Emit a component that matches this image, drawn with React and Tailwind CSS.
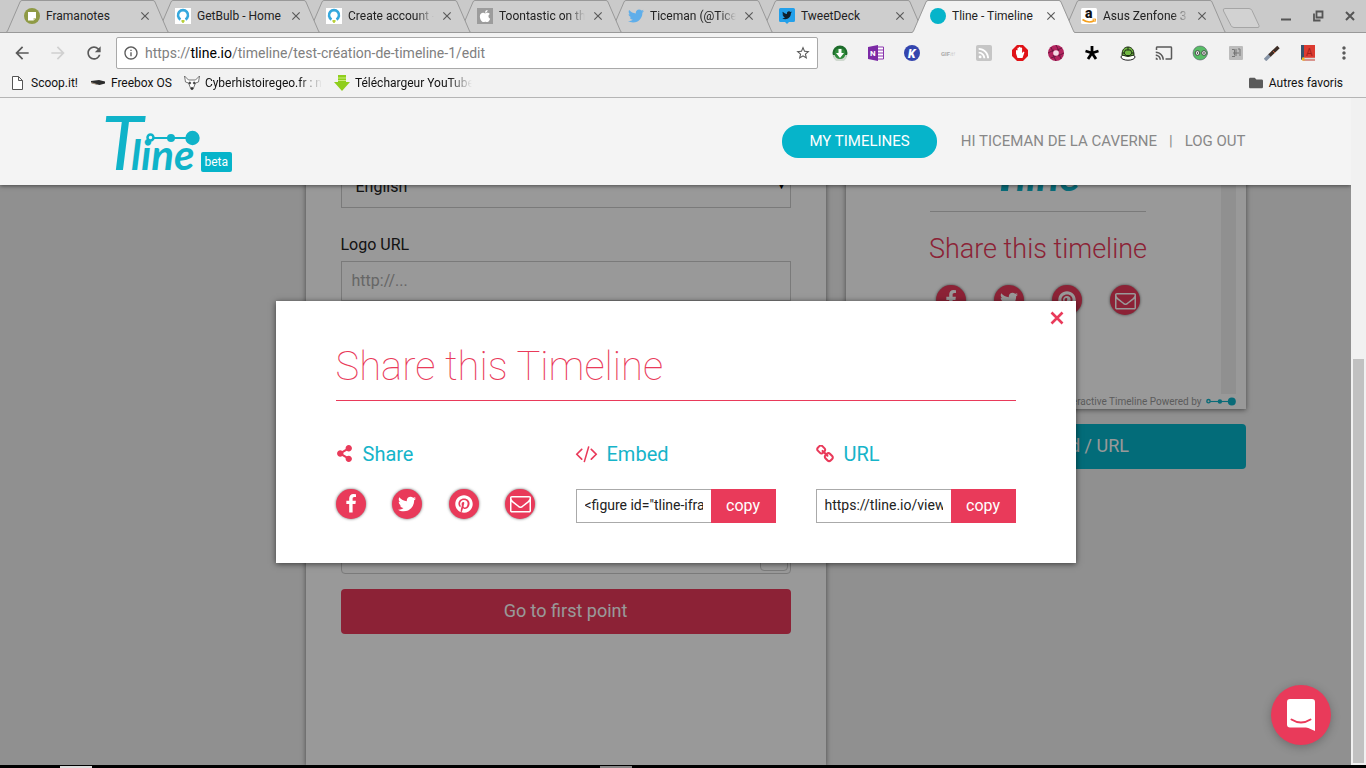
import React from 'react';
import clsx from 'clsx';
import { FaTwitter, FaPinterest, FaShareAlt, FaApple, FaFolder } from 'react-icons/fa';
import {
  MdArrowBack,
  MdArrowForward,
  MdRefresh,
  MdInfoOutline,
  MdStarBorder,
  MdMoreVert,
  MdCast,
  MdRssFeed,
  MdClose,
} from 'react-icons/md';

const tabs = [
  { title: 'Framanotes', icon: <NoteIcon /> },
  { title: 'GetBulb - Home', icon: <BulbIcon /> },
  { title: 'Create account - GetBulb', icon: <BulbIcon />, fade: true },
  { title: 'Toontastic on the App Store', icon: <AppleIcon />, fade: true },
  { title: 'Ticeman (@Ticeman)', icon: <FaTwitter className="size-4 text-[#5faeea]" />, fade: true },
  { title: 'TweetDeck', icon: <TweetDeckIcon /> },
  { title: 'Tline - Timeline', icon: <span className="block size-4 rounded-full bg-[#06b4ca]" />, active: true },
  { title: 'Asus Zenfone 3', icon: <AmazonIcon />, fade: true },
];

function NoteIcon() {
  return (
    <svg viewBox="0 0 16 16" className="size-4">
      <circle cx="8" cy="8" r="8" fill="#8f9a45" />
      <path d="M4 4h8v6l-2.500 2.500H4z" fill="#fff" />
      <path d="M9.500 12.500V10H12z" fill="#c3cb8c" />
    </svg>
  );
}

function BulbIcon() {
  return (
    <svg viewBox="0 0 16 16" className="size-4">
      <rect width="16" height="16" fill="#fff" />
      <path d="M5.500 11.500A5 5 0 1 1 10.500 11.500" fill="none" stroke="#35a8dd" strokeWidth="2.600" />
      <path d="M6.500 12h3v1.500L8.500 15h-1l-1-1.500z" fill="#b8cf3a" />
    </svg>
  );
}

function AppleIcon() {
  return (
    <span className="flex size-4 items-center justify-center bg-[#9c9c9c]">
      <FaApple className="size-3.5 text-white" />
    </span>
  );
}

function TweetDeckIcon() {
  return (
    <svg viewBox="0 0 16 16" className="size-4">
      <path d="M1.500 0h13A1.500 1.500 0 0 1 16 1.500v11a1.500 1.500 0 0 1-1.500 1.500H10l-2 2-2-2H1.500A1.500 1.500 0 0 1 0 12.500v-11A1.500 1.500 0 0 1 1.500 0z" fill="#23a0ea" />
      <path d="M13 4.300c-.4.200-.8.300-1.100.300.4-.2.700-.6.800-1-.4.200-.8.400-1.200.5A2 2 0 0 0 8 5.900C6.300 5.800 4.800 5 3.800 3.800c-.5.900-.3 2 .6 2.600-.3 0-.6-.1-.9-.2 0 1 .7 1.700 1.600 1.900-.3.100-.6.100-.9 0 .3.800 1 1.300 1.900 1.400-.9.600-1.800.9-2.900.8 3.800 2.200 8.700 0 8.700-5 .4-.3.800-.6 1.100-1z" fill="#10202c" />
    </svg>
  );
}

function AmazonIcon() {
  return (
    <svg viewBox="0 0 16 16" className="size-4">
      <rect width="16" height="16" rx="1.500" fill="#fff" />
      <text x="4" y="10" fontSize="14" fontWeight="900" fill="#111">a</text>
      <path d="M1.500 11.500q6 4.500 12 1" fill="none" stroke="#f5a01d" strokeWidth="1.600" />
      <path d="M11.500 11.200l3.200-.2-.8 3" fill="none" stroke="#f5a01d" />
    </svg>
  );
}

function FacebookIcon({ className }) {
  return (
    <svg viewBox="0 0 1792 1792" fill="currentColor" className={className}>
      <path d="M1343 12v264h-157q-86 0-116 36t-30 108v189h293l-39 296h-254v759h-306v-759h-255v-296h255v-218q0-186 104-288.500t277-102.500q147 0 228 12z" />
    </svg>
  );
}

function EnvelopeIcon({ className }) {
  return (
    <svg viewBox="0 0 1792 1792" fill="currentColor" className={className}>
      <path d="M1664 1504v-768q-32 36-69 66-268 206-426 338-51 43-83 67t-86.500 48.500-102.500 24.500h-2q-48 0-102.500-24.500t-86.500-48.500-83-67q-158-132-426-338-37-30-69-66v768q0 13 9.500 22.500t22.500 9.500h1472q13 0 22.500-9.500t9.500-22.500zm0-1051v-24.500l-.5-13-3-12.500-5.500-9-9-7.500-14-2.500h-1472q-13 0-22.500 9.500t-9.500 22.500q0 168 147 284 193 152 401 317 6 5 35 29.500t46 37.500 44.500 31.500 50.500 27.500 43 9h2q20 0 43-9t50.500-27.500 44.500-31.500 46-37.500 35-29.500q208-165 401-317 54-43 100.500-115.500t46.500-131.500zm128-37v1088q0 66-47 113t-113 47h-1472q-66 0-113-47t-47-113v-1088q0-66 47-113t113-47h1472q66 0 113 47t47 113z" />
    </svg>
  );
}

function CodeIcon({ className }) {
  return (
    <svg viewBox="0 0 1792 1792" fill="currentColor" className={className}>
      <path d="M553 1399l-50 50q-10 10-23 10t-23-10l-466-466q-10-10-10-23t10-23l466-466q10-10 23-10t23 10l50 50q10 10 10 23t-10 23l-393 393 393 393q10 10 10 23t-10 23zm591-1067l-373 1291q-4 13-15.500 19.500t-23.500 2.500l-62-17q-13-4-19.500-15.500t-2.500-24.500l373-1291q4-13 15.500-19.500t23.500-2.500l62 17q13 4 19.500 15.500t2.500 24.500zm657 651l-466 466q-10 10-23 10t-23-10l-50-50q-10-10-10-23t10-23l393-393-393-393q-10-10-10-23t10-23l50-50q10-10 23-10t23 10l466 466q10 10 10 23t-10 23z" />
    </svg>
  );
}

function LinkIcon({ className }) {
  return (
    <svg viewBox="64 64 1664 1664" fill="currentColor" className={className}>
      <path d="M1520 1216q0-40-28-68l-208-208q-28-28-68-28-42 0-72 32 3 3 19 18.500t21.500 21.500 15 19 13 25.500 3.500 27.500q0 40-28 68t-68 28q-15 0-27.500-3.500t-25.500-13-19-15-21.500-21.500-18.500-19q-33 31-33 73 0 40 28 68l206 207q27 27 68 27 40 0 68-26l147-146q28-28 28-67zm-703-705q0-40-28-68l-206-207q-28-28-68-28-39 0-68 27l-147 146q-28 28-28 67 0 40 28 68l208 208q27 27 68 27 42 0 72-31-3-3-19-18.500t-21.500-21.500-15-19-13-25.500-3.500-27.500q0-40 28-68t68-28q15 0 27.500 3.500t25.500 13 19 15 21.500 21.500 18.500 19q33-31 33-73zm895 705q0 120-85 203l-147 146q-83 83-203 83-121 0-204-85l-206-207q-83-83-83-203 0-123 88-209l-88-88q-86 88-208 88-120 0-204-84l-208-208q-84-84-84-204t85-203l147-146q83-83 203-83 121 0 204 85l206 207q83 83 83 203 0 123-88 209l88 88q86-88 208-88 120 0 204 84l208 208q84 84 84 204z" />
    </svg>
  );
}

function Nodes({ className }) {
  return (
    <svg viewBox="0 0 54 16" className={className}>
      <path d="M7 8h40" stroke="#0fb3c9" strokeWidth="2" />
      <circle cx="4.500" cy="7.500" r="3" fill="#f4f4f4" stroke="#0fb3c9" strokeWidth="2.500" />
      <circle cx="25" cy="8" r="4" fill="#0fb3c9" />
      <circle cx="46.500" cy="8" r="7.200" fill="#0fb3c9" />
    </svg>
  );
}

function Logo() {
  return (
    <span className="relative block h-[60px] w-[95px] whitespace-nowrap text-[#0fb3c9]">
      <span className="-ml-1 block font-['Lato',sans-serif] text-[42px] leading-[58px] font-bold italic first-letter:-mr-3 first-letter:text-[76px] first-letter:font-normal">
        Tline
      </span>
      <Nodes className="absolute top-[18px] left-10 h-4 w-[54px]" />
    </span>
  );
}

function Tab({ tab, order }) {
  return (
    <div
      className="relative -mr-3 flex h-[33px] w-[163px] shrink-0 items-center pr-[17px] pl-[18px]"
      style={{ zIndex: tab.active ? 20 : order }}
    >
      <svg viewBox="0 0 163 33" className="absolute inset-0 h-full w-full">
        <path
          d="M0 33L0 32.500Q1 32 1.500 31L14 2.500Q14.500 1 16 1H147Q148.500 1 149 2.500L161.500 31Q162 32.500 163 32.500L163 33Z"
          fill={tab.active ? '#f2f2f2' : '#cecece'}
        />
        <path
          d="M0 32.500Q1 32 1.500 31L14 2Q14.500 .5 16 .5H147Q148.500 .5 149 2L161.500 31Q162 32.500 163 32.500"
          fill="none"
          stroke="#999"
        />
        {!tab.active && <path d="M0 32.500H163" stroke="#999" />}
      </svg>
      <span className="relative shrink-0">{tab.icon}</span>
      <span
        className={clsx(
          'relative ml-1.5 flex-1 overflow-hidden whitespace-nowrap text-xs text-[#222]',
          tab.fade && 'mask-r-from-80%'
        )}
      >
        {tab.title}
      </span>
      <button type="button" aria-label="Close tab" className="relative ml-1.5 text-[#5a5a5a]">
        <MdClose className="size-3.5" />
      </button>
    </div>
  );
}

const extensions = [
  <svg viewBox="0 0 16 16" className="size-4">
    <circle cx="8" cy="8" r="7.500" fill="#1d6b2b" />
    <path d="M1 10a7 7 0 0 0 14 0" fill="#cfd8cf" />
    <circle cx="8" cy="8.500" r="5.500" fill="#2f8a3a" />
    <path d="M6.500 4h3v4H12l-4 5-4-5h2.500z" fill="#fff" />
  </svg>,
  <svg viewBox="0 0 16 16" className="size-4">
    <path d="M9 2h6.500v12H9z" fill="#fff" stroke="#8a35ad" />
    <path d="M10 5h5M10 8h5M10 11h5" stroke="#8a35ad" />
    <path d="M0 2l10-2v16L0 14z" fill="#7c2aa5" />
    <text x="2" y="11" fontSize="8" fontWeight="bold" fill="#fff">N</text>
  </svg>,
  <svg viewBox="0 0 16 16" className="size-4">
    <circle cx="8" cy="8" r="8" fill="#3445ae" />
    <text x="4" y="12.500" fontSize="12" fontWeight="900" fontStyle="italic" fill="#fff">K</text>
  </svg>,
  <span className="text-[6px] font-bold text-[#aaa]">GIF<i className="font-normal text-[#ccc]">it!</i></span>,
  <span className="flex size-4 items-center justify-center rounded-xs bg-[#c6c6c6]">
    <MdRssFeed className="size-4 text-white" />
  </span>,
  <svg viewBox="0 0 16 16" className="size-4">
    <path d="M5 0h6l5 5v6l-5 5H5l-5-5V5z" fill="#e01318" />
    <path d="M4 8.500V5.500q.8-1 1.500 0V3q.8-1 1.500 0v-.8q.8-1 1.500 0V3q.9-1 1.600 0v5l1.600-1.500q1 .2.600 1.200L10.500 13h-5z" fill="#fff" />
  </svg>,
  <svg viewBox="0 0 16 16" className="size-4">
    <circle cx="8" cy="8" r="8" fill="#b3245f" />
    <path d="M8 0l3 6M16 8l-6 3M8 16l-3-6M0 8l6-3M14 3l-5 2M13 14l-2-5M3 13l5-2M3 2l2 5" stroke="#6e1740" />
    <circle cx="8" cy="8" r="2.800" fill="#f3dbe5" />
  </svg>,
  <svg viewBox="0 0 16 16" className="size-4">
    <path d="M8 8V1M8 8l6.500-2M8 8l4 6M8 8l-4 6M8 8L1.500 6" stroke="#000" strokeWidth="2.800" />
  </svg>,
  <svg viewBox="0 0 16 16" className="size-4">
    <ellipse cx="8" cy="12" rx="7" ry="3.200" fill="#fff" stroke="#222" />
    <path d="M2 10C2 4 5 2 8 2s6 2 6 8q-6 3-12 0z" fill="#73b944" stroke="#1c2c14" />
    <path d="M5.500 5h5l1.500 3-2 2.500H6L4 8zM8 2v3M4 8H2M12 8h2" fill="none" stroke="#1c2c14" />
  </svg>,
  <MdCast className="size-[18px] text-[#5a5a5a]" />,
  <svg viewBox="0 0 16 16" className="size-4">
    <path d="M8 1a7 7 0 1 0 0 14c3 0 5-1.500 6-3l2-4-2-4c-1-1.500-3-3-6-3z" fill="#58bd66" stroke="#556" strokeWidth=".6" />
    <circle cx="5.500" cy="8" r="2.300" fill="#fff" stroke="#444" />
    <circle cx="12" cy="8" r="2.300" fill="#fff" stroke="#444" />
    <circle cx="5.500" cy="8" r=".8" />
    <circle cx="12" cy="8" r=".8" />
  </svg>,
  <svg viewBox="0 0 16 16" className="size-4">
    <rect x="1" y="1" width="14" height="14" rx="1" fill="#bcbcbc" />
    <path d="M4 4.500h2.500v6M8 4v7M10 4h2v7M5 8h6M4 11.500h3" fill="none" stroke="#777" />
  </svg>,
  <svg viewBox="0 0 16 16" className="size-4">
    <path d="M1 15l5-5" stroke="#8794a6" strokeWidth="3.500" />
    <path d="M5.500 10.500l9-8.500" stroke="#3d2d26" strokeWidth="3.500" />
    <path d="M9 6l2 2" stroke="#c65a33" />
  </svg>,
  <svg viewBox="0 0 16 16" className="size-4">
    <path d="M1 0h14v13H1z" fill="#dc3b31" />
    <path d="M1 0h3v13l-3 2z" fill="#37536d" />
    <path d="M3 13.500h12" stroke="#ddd" strokeWidth="1.500" />
    <path d="M3 15h12" stroke="#c0392b" />
    <path d="M2 12.500h2.500V16L3.200 15 2 16z" fill="#f3b71e" />
    <text x="6" y="10.500" fontSize="10" fill="#a3201a">A</text>
  </svg>,
  <MdMoreVert className="size-5 text-[#5a5a5a]" />,
];

function BrowserChrome() {
  return (
    <div className="shrink-0 border-b border-[#b5b5b5] bg-[#f2f2f2]">
      <div className="flex h-[33px] items-center border-b border-[#999] bg-[#cacaca] pl-1.5">
        <div className="flex h-[33px]">
          {tabs.map((tab, i) => (
            <Tab key={i} tab={tab} order={tabs.length - i} />
          ))}
        </div>
        <button type="button" aria-label="New tab" className="ml-2 pt-1">
          <svg viewBox="0 0 38 20" className="h-5 w-[38px]">
            <path d="M3 .5h24q2 0 3 2l7 15q.5 2-1 2H12q-2 0-3-2L1.500 3Q.5.5 3 .5z" fill="#d2d2d2" stroke="#a5a5a5" />
          </svg>
        </button>
        <div className="ml-auto flex text-[#555]">
          <button type="button" aria-label="Minimize" className="flex h-8 w-8 items-center justify-center">
            <svg viewBox="0 0 12 12" className="size-3"><path d="M1 9.500h10" stroke="currentColor" strokeWidth="2" /></svg>
          </button>
          <button type="button" aria-label="Restore" className="flex h-8 w-8 items-center justify-center">
            <svg viewBox="0 0 12 12" className="size-3" fill="none" stroke="currentColor" strokeWidth="1.800">
              <path d="M4.500 1.500h6v6h-6zM2 3.500v7h6.500" />
            </svg>
          </button>
          <button type="button" aria-label="Close" className="flex h-8 w-8 items-center justify-center">
            <svg viewBox="0 0 12 12" className="size-3"><path d="M2 2l8 8M10 2l-8 8" stroke="currentColor" strokeWidth="2" /></svg>
          </button>
        </div>
      </div>

      <div className="flex items-center px-1 pt-1">
        <button type="button" aria-label="Back" className="flex w-9 justify-center text-[#5a5a5a]"><MdArrowBack className="size-5" /></button>
        <button type="button" aria-label="Forward" className="flex w-9 justify-center text-[#d0d0d0]"><MdArrowForward className="size-5" /></button>
        <button type="button" aria-label="Reload" className="flex w-9 justify-center text-[#5a5a5a]"><MdRefresh className="size-5" /></button>
        <div className="mx-1 flex h-8 flex-1 items-center rounded-xs border border-[#a9a9a9] bg-white px-1.5 text-[#5a5a5a]">
          <MdInfoOutline className="size-4" />
          <p className="flex-1 pl-1.5 text-sm text-[#808080]">
            https://<span className="text-black">tline.io</span>/timeline/test-création-de-timeline-1/edit
          </p>
          <MdStarBorder className="size-4" />
        </div>
        {extensions.map((icon, i) => (
          <span key={i} className="flex w-9 items-center justify-center">{icon}</span>
        ))}
      </div>

      <div className="flex h-7 items-center pr-[23px] pl-3 text-xs text-[#111]">
        <a href="#" className="flex items-center gap-2">
          <svg viewBox="0 0 11 14" className="h-3.5 w-[11px]" fill="#fff" stroke="#555">
            <path d="M.5.500h6l4 4v9H.5zM6.500.500v4h4" />
          </svg>
          Scoop.it!
        </a>
        <a href="#" className="ml-3 flex items-center gap-[5px]">
          <svg viewBox="0 0 16 16" className="size-4">
            <path d="M1 6l8-1 6 1.500v2L9.500 10 1 8z" fill="#2c2c2c" />
            <path d="M1 7.500l6 2" stroke="#a5917d" />
          </svg>
          Freebox OS
        </a>
        <a href="#" className="ml-3 flex items-center gap-[5px]">
          <svg viewBox="0 0 16 16" className="size-4" fill="#fff" stroke="#555" strokeWidth=".8">
            <path d="M.5 1l4 4h7l4-4-1 6-3 1-2 5-1.500 1.500L6.500 13l-2-5-3-1z" />
            <circle cx="5.800" cy="8" r="1" fill="#222" />
            <circle cx="10.200" cy="8" r="1" fill="#222" />
            <circle cx="8" cy="13.500" r="1.200" fill="#222" />
          </svg>
          <span className="w-[117px] overflow-hidden whitespace-nowrap mask-r-from-80%">Cyberhistoiregeo.fr : nu</span>
        </a>
        <a href="#" className="ml-3 flex items-center gap-[5px]">
          <svg viewBox="0 0 16 16" className="size-4">
            <path d="M4 0h8v7h4l-8 9-8-9h4z" fill="#8fce1c" />
            <path d="M4 3h8M4 5.500h8" stroke="#c9ee7a" />
          </svg>
          <span className="w-[117px] overflow-hidden whitespace-nowrap mask-r-from-80%">Téléchargeur YouTube</span>
        </a>
        <a href="#" className="ml-auto flex items-center gap-1.5">
          <FaFolder className="size-3.5 text-[#5a5a5a]" />
          Autres favoris
        </a>
      </div>
    </div>
  );
}

function SiteHeader() {
  return (
    <header className="absolute inset-x-0 top-0 z-20 bg-[#f4f4f4] shadow-[0_1px_4px_rgba(0,0,0,0.5)]">
      <div className="mx-auto flex h-[87px] max-w-[1140px] items-center">
        <a href="#" className="flex items-end">
          <Logo />
          <span className="rounded-xs bg-[#06b4ca] px-1 py-0.5 text-xs text-white">beta</span>
        </a>
        <nav className="ml-auto flex items-center text-[15px] text-[#888]">
          <a href="#" className="mr-6 flex h-[33px] items-center rounded-2xl bg-[#06b4ca] px-[27px] text-white">
            MY TIMELINES
          </a>
          <a href="#">HI TICEMAN DE LA CAVERNE</a>
          <span className="mx-3">|</span>
          <a href="#">LOG OUT</a>
        </nav>
      </div>
    </header>
  );
}

function SocialLinks({ className }) {
  const circle =
    'flex size-[30px] items-center justify-center rounded-full bg-[#e93a5a] text-white shadow-[0_0_3px_rgba(0,0,0,0.6)]';
  return (
    <div className={clsx('flex justify-between', className)}>
      <a href="#" aria-label="Facebook" className={circle}><FacebookIcon className="size-5" /></a>
      <a href="#" aria-label="Twitter" className={circle}><FaTwitter className="size-[18px]" /></a>
      <a href="#" aria-label="Pinterest" className={circle}><FaPinterest className="size-[18px]" /></a>
      <a href="#" aria-label="Email" className={circle}><EnvelopeIcon className="size-[21px]" /></a>
    </div>
  );
}

function EditForm() {
  return (
    <form className="w-[520px] shrink-0 bg-white px-[35px] pt-[70px] shadow-[0_1px_5px_rgba(0,0,0,0.5)]">
      <div className="relative">
        <select aria-label="Language" className="h-10 w-full appearance-none border border-[#ccc] px-3.5 pb-0.5 text-base text-[#222]">
          <option>English</option>
        </select>
        <span className="pointer-events-none absolute top-2.5 right-1 text-[10px] text-black">▼</span>
      </div>
      <label htmlFor="logo-url" className="mt-[25px] mb-1 block text-base text-[#222]">Logo URL</label>
      <input
        id="logo-url"
        type="text"
        placeholder="http://..."
        className="block h-10 w-full border border-[#ccc] px-2.5 pb-0.5 text-base placeholder:text-[#aaa]"
      />
      <div className="mt-[25px] flex h-[248px] items-end justify-end rounded-sm border border-[#ccc] p-0.5">
        <span className="size-7 rounded-sm border border-[#ccc]" />
      </div>
      <button type="button" className="mt-[15px] h-[45px] w-full rounded-sm bg-[#e93a5a] pb-0.5 text-lg text-white">
        Go to first point
      </button>
    </form>
  );
}

function Preview() {
  return (
    <div className="w-[400px] shrink-0">
      <div className="bg-white px-2.5 shadow-[0_1px_5px_rgba(0,0,0,0.5)]">
        <div className="flex h-[296px]">
          <div className="flex flex-1 flex-col items-center pt-9">
            <div className="flex h-[78px] w-[216px] items-end justify-center border-b border-[#ccc] pb-[18px]">
              <Logo />
            </div>
            <h3 className="mt-[19px] text-[27px] leading-9 font-light whitespace-nowrap text-[#e93a5a]">Share this timeline</h3>
            <SocialLinks className="mt-[18px] w-[204px]" />
          </div>
          <div className="w-[15px] bg-[#f1f1f1]" />
        </div>
        <div className="flex h-[15px] items-center justify-end gap-1 text-[10px] text-[#999]">
          Interactive Timeline Powered by
          <Nodes className="h-[9px] w-[30px]" />
        </div>
      </div>
      <button type="button" className="mt-[15px] h-[45px] w-full rounded-sm bg-[#06b4ca] pb-0.5 text-lg text-white">
        Share / Embed / URL
      </button>
    </div>
  );
}

function CopyField({ label, value }) {
  return (
    <div className="mt-[22px] flex h-[34px]">
      <div className="min-w-0 flex-1 border border-r-0 border-[#aaa] px-2">
        <input aria-label={label} readOnly value={value} className="h-full w-full pb-0.5 text-sm text-[#222]" />
      </div>
      <button type="button" className="w-[65px] bg-[#e93a5a] text-base text-white">copy</button>
    </div>
  );
}

function ShareModal() {
  const heading = 'flex items-center gap-2.5 text-xl leading-[26px] text-[#16b4c9]';
  return (
    <div
      role="dialog"
      aria-labelledby="share-title"
      className="relative w-[800px] bg-white px-[60px] py-10 shadow-[0_1px_6px_rgba(0,0,0,0.6)]"
    >
      <button type="button" aria-label="Close" className="absolute top-2.5 right-3 text-[#e93a5a]">
        <svg viewBox="0 0 14 14" className="size-3.5">
          <path d="M1.500 1.500l11 11M12.500 1.500l-11 11" stroke="currentColor" strokeWidth="2.600" />
        </svg>
      </button>
      <h2 id="share-title" className="border-b border-[#e93a5a] pb-[7px] text-[40px] leading-[52px] font-thin text-[#e93a5a]">
        Share this Timeline
      </h2>
      <div className="mt-10 grid grid-cols-3 gap-10">
        <section>
          <h3 className={heading}><FaShareAlt className="size-[17px] text-[#e93a5a]" />Share</h3>
          <SocialLinks className="mt-[22px]" />
        </section>
        <section>
          <h3 className={heading}><CodeIcon className="size-[21px] overflow-visible text-[#e93a5a]" />Embed</h3>
          <CopyField label="Embed code" value={'<figure id="tline-iframe"></figure>'} />
        </section>
        <section>
          <h3 className={heading}><LinkIcon className="size-[18px] text-[#e93a5a]" />URL</h3>
          <CopyField label="Timeline URL" value="https://tline.io/view/" />
        </section>
      </div>
    </div>
  );
}

export default function App() {
  return (
    <div className="flex h-screen flex-col overflow-hidden font-['Roboto',sans-serif]">
      <BrowserChrome />
      <div className="flex min-h-0 flex-1">
        <main className="relative flex-1 overflow-hidden bg-[#f0f0f0]">
          <SiteHeader />
          <div className="mx-auto flex h-full max-w-[1140px] items-stretch justify-end gap-5">
            <EditForm />
            <Preview />
          </div>
          <div className="absolute inset-0 z-10 flex items-center justify-center bg-black/40">
            <ShareModal />
          </div>
          <button
            type="button"
            aria-label="Open chat"
            className="absolute right-5 bottom-5 z-20 flex size-[60px] items-center justify-center rounded-full bg-[#e93a5a] shadow-[0_2px_10px_rgba(0,0,0,0.25)]"
          >
            <svg viewBox="0 0 28 32" className="h-8 w-7">
              <path d="M3 0h22a3 3 0 0 1 3 3v29c-3-1-6-3.500-9-3.500H3a3 3 0 0 1-3-3V3a3 3 0 0 1 3-3z" fill="#fff" />
              <path d="M4.500 20.500q9.500 6 19 0" fill="none" stroke="#e93a5a" strokeWidth="2" strokeLinecap="round" />
            </svg>
          </button>
        </main>
        <div className="flex w-[15px] flex-col justify-end bg-[#f1f1f1] p-0.5">
          <div className="h-[61%] bg-[#c1c1c1]" />
        </div>
      </div>
      <div className="flex h-[3px] shrink-0 items-end bg-black pl-[60px]">
        <span className="h-0.5 w-8 bg-[#ddd]" />
        <span className="ml-[508px] h-0.5 w-8 bg-[#888]" />
      </div>
    </div>
  );
}
